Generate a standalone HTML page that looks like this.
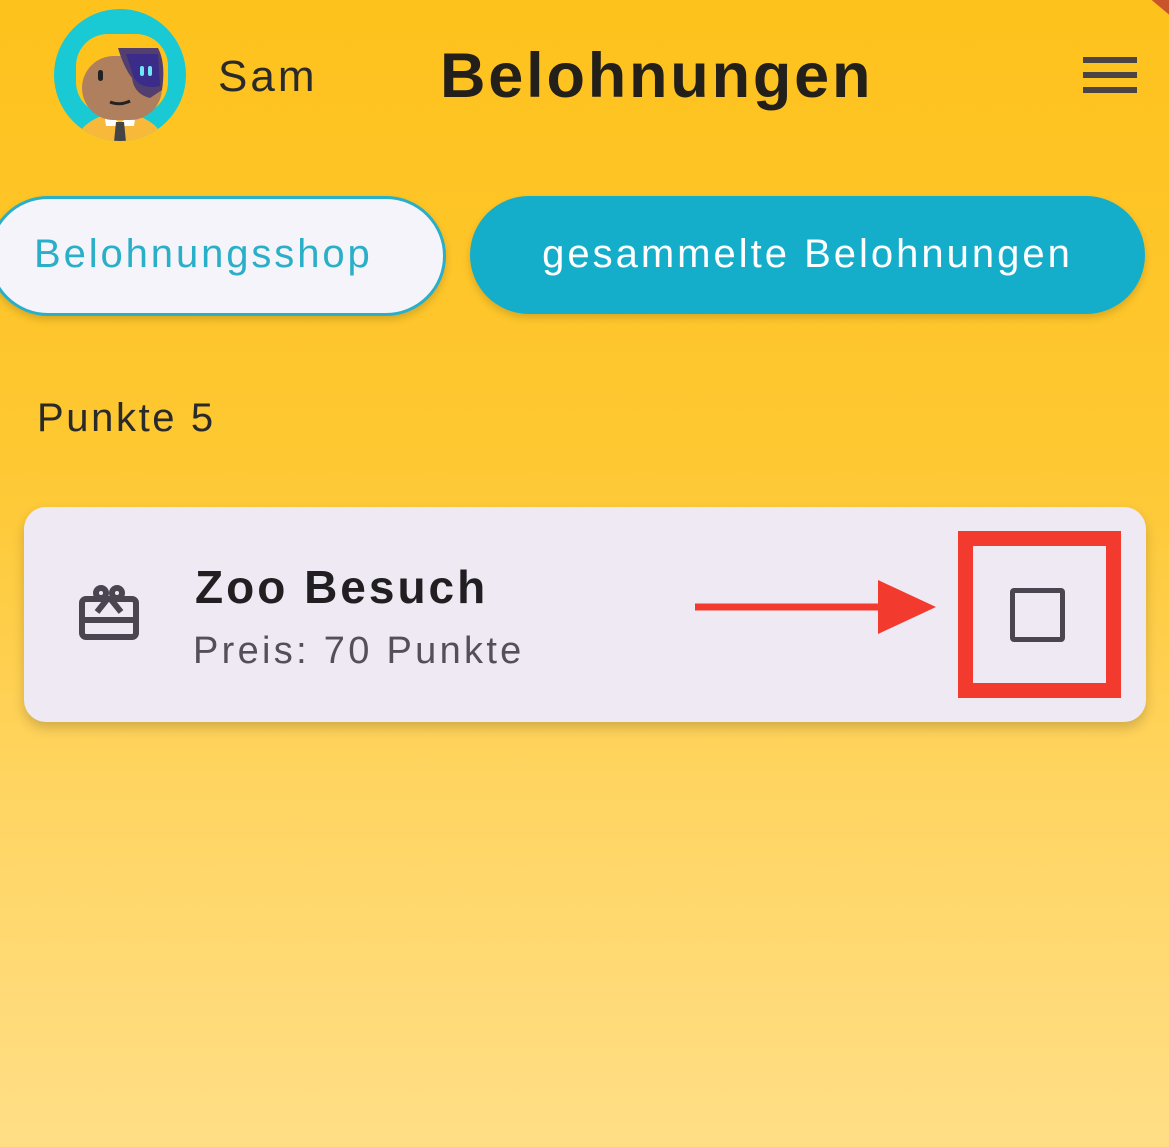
<!DOCTYPE html><html><head><style>
body{margin:0;width:1169px;height:1147px;overflow:hidden;position:relative;font-family:"Liberation Sans",sans-serif;background:linear-gradient(#FEC21C 0%,#FEC832 40%,#FFD563 70%,#FFDE86 100%);}
.a{position:absolute}
</style></head><body>
<div class="a" style="right:-20px;top:-20px;width:40px;height:30px;background:#C9532A;transform:rotate(40deg)"></div>
<svg class="a" style="left:54px;top:8px" width="132" height="134" viewBox="0 0 132 134">
<defs><clipPath id="c"><circle cx="66" cy="67" r="66"/></clipPath></defs>
<circle cx="66" cy="67" r="66" fill="#19C9D3"/>
<g clip-path="url(#c)">
<rect x="22" y="26" width="92" height="80" rx="32" fill="#FEC21C"/>
<path d="M20 134 Q30 108 66 104 Q102 108 112 134Z" fill="#F8B93A"/>
<path d="M50 104 L66 115 L82 104 L80 118 L52 118Z" fill="#fff"/>
<path d="M62 114 L70 114 L72 134 L60 134Z" fill="#444"/>
<rect x="28" y="48" width="80" height="64" rx="32" fill="#B07F5E"/>
<path d="M64 40 L104 40 Q112 55 108 82 L96 90 Q80 86 78 70 Q70 60 64 40Z" fill="#523F6E"/>
<path d="M72 46 L104 46 L106 78 Q88 82 80 70Z" fill="#3A2C88"/>
<rect x="86" y="58" width="4" height="10" rx="2" fill="#6FE6F5"/><rect x="94" y="58" width="4" height="10" rx="2" fill="#6FE6F5"/>
<rect x="44" y="62" width="5" height="11" rx="2.5" fill="#222"/>
<path d="M56 94 Q66 98 76 93" stroke="#222" stroke-width="3" fill="none"/>
</g></svg>
<div class="a" style="left:218px;top:52px;font-size:44px;color:#2a2a2a;letter-spacing:3px">Sam</div>
<div class="a" style="left:440px;top:40px;font-size:63px;font-weight:bold;color:#231f1a;letter-spacing:2.8px">Belohnungen</div>
<div class="a" style="left:1083px;top:57px;width:54px;height:6px;background:#4a4544"></div>
<div class="a" style="left:1083px;top:72px;width:54px;height:6px;background:#4a4544"></div>
<div class="a" style="left:1083px;top:87px;width:54px;height:6px;background:#4a4544"></div>
<div class="a" style="left:-12px;top:196px;width:452px;height:114px;border:3px solid #2AAFC8;border-radius:60px;background:#F5F4FA;box-shadow:0 4px 8px rgba(0,0,0,.15)"></div>
<div class="a" style="left:34px;top:232px;font-size:40px;color:#2AAFC8;letter-spacing:2.9px">Belohnungsshop</div>
<div class="a" style="left:470px;top:196px;width:675px;height:118px;border-radius:60px;background:#14AECB;box-shadow:0 4px 8px rgba(0,0,0,.15)"></div>
<div class="a" style="left:470px;top:232px;width:675px;text-align:center;font-size:40px;color:#fff;letter-spacing:3px">gesammelte Belohnungen</div>
<div class="a" style="left:37px;top:396px;font-size:40px;color:#2a2a2a;letter-spacing:2.6px">Punkte 5</div>
<div class="a" style="left:24px;top:507px;width:1122px;height:215px;border-radius:22px;background:#EFE9F3;box-shadow:0 6px 12px rgba(0,0,0,.18)"></div>
<svg class="a" style="left:78px;top:584px" width="62" height="58" viewBox="0 0 62 58">
<g stroke="#4a4550" stroke-width="6" fill="none">
<rect x="4" y="15" width="54" height="38" rx="4"/>
<line x1="4" y1="36" x2="58" y2="36"/>
<circle cx="23" cy="9" r="5"/><circle cx="39" cy="9" r="5"/>
<path d="M31 13 L19 28 M31 13 L43 28"/></g></svg>
<div class="a" style="left:195px;top:560px;font-size:46px;font-weight:bold;color:#221f22;letter-spacing:3px">Zoo Besuch</div>
<div class="a" style="left:193px;top:630px;font-size:38px;color:#555058;letter-spacing:3.3px">Preis: 70 Punkte</div>
<svg class="a" style="left:690px;top:578px" width="250" height="60"><line x1="5" y1="29" x2="190" y2="29" stroke="#F23A2E" stroke-width="7"/><path d="M188 2 L246 29 L188 56Z" fill="#F23A2E"/></svg>
<div class="a" style="left:958px;top:531px;width:133px;height:137px;border:15px solid #F23A2E"></div>
<div class="a" style="left:1010px;top:588px;width:55px;height:54px;border:5px solid #4a4550;border-radius:4px;box-sizing:border-box"></div>
</body></html>
